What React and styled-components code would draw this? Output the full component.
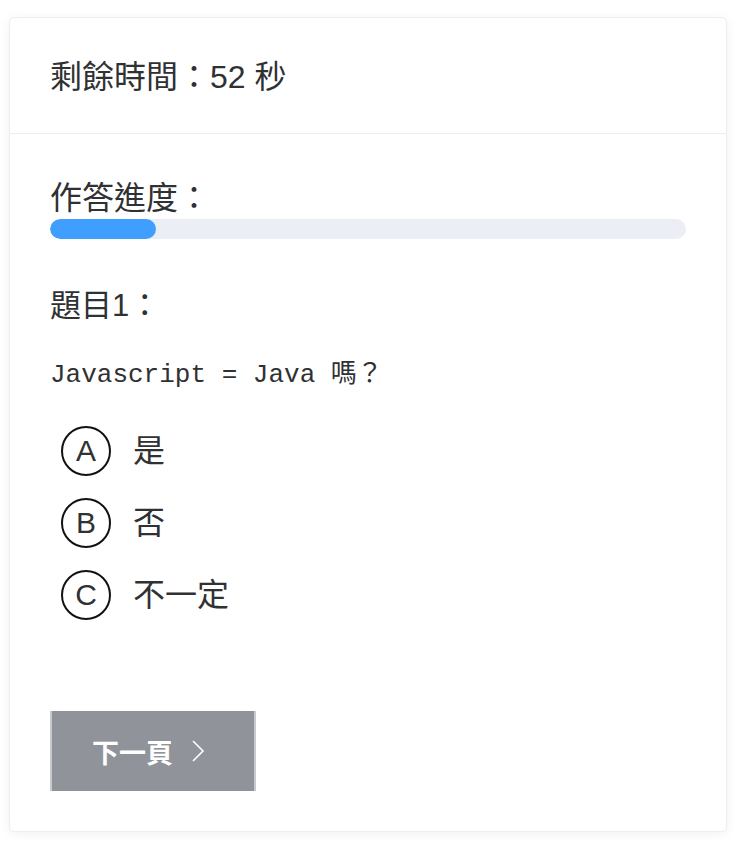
import styled, { createGlobalStyle } from "styled-components";

const GlobalStyle = createGlobalStyle`
  body {
    margin: 0;
    background: #ffffff;
    font-family: "Liberation Sans", "Noto Sans CJK TC", sans-serif;
    color: #303133;
  }
`;

const options = [
  { key: "A", label: "是" },
  { key: "B", label: "否" },
  { key: "C", label: "不一定" },
];

const App = () => {
  const progress = 1 / 6;

  return (
    <Page>
      <GlobalStyle />
      <Card>
        <Header>
          <Timer>剩餘時間：52 秒</Timer>
        </Header>
        <Body>
          <Label>作答進度：</Label>
          <Track>
            <Fill style={{ width: `${progress * 100}%` }} />
          </Track>
          <Title>題目1：</Title>
          <Question>Javascript = Java 嗎？</Question>
          <OptionList>
            {options.map(({ key, label }) => (
              <Option key={key}>
                <Circle>{key}</Circle>
                <OptionText>{label}</OptionText>
              </Option>
            ))}
          </OptionList>
          <NextButton disabled>
            下一頁
            <svg width="14" height="24" viewBox="0 0 14 24" fill="none">
              <path d="M2 2 L12 12 L2 22" stroke="#fff" strokeWidth="1.6" />
            </svg>
          </NextButton>
        </Body>
      </Card>
    </Page>
  );
};

const Page = styled.div`
  padding: 17px 15px 14px 9px;
`;

const Card = styled.div`
  background: #fff;
  border: 1px solid #ebeef5;
  border-radius: 5px;
  box-shadow: 0 2px 12px rgba(0, 0, 0, 0.06);
  overflow: hidden;
`;

const Header = styled.div`
  padding: 41px 40px 38px;
  border-bottom: 1px solid #ebeef5;
`;

const Timer = styled.div`
  font-size: 32px;
  line-height: 36px;
`;

const Body = styled.div`
  display: flex;
  flex-direction: column;
  align-items: flex-start;
  padding: 46px 40px 40px;
`;

const Label = styled.div`
  font-size: 32px;
  line-height: 36px;
`;

const Track = styled.div`
  align-self: stretch;
  height: 20px;
  margin-top: 3px;
  border-radius: 10px;
  background: #ebeef5;
  overflow: hidden;
`;

const Fill = styled.div`
  height: 100%;
  border-radius: 10px;
  background: #409eff;
`;

const Title = styled.div`
  margin-top: 49px;
  font-size: 31px;
  line-height: 36px;
`;

const Question = styled.div`
  margin-top: 36px;
  font-family: "Liberation Mono", "Noto Sans CJK TC", monospace;
  font-size: 26px;
  line-height: 30px;
`;

const OptionList = styled.div`
  display: flex;
  flex-direction: column;
  gap: 22px;
  margin-top: 36px;
  padding-left: 11px;
`;

const Option = styled.div`
  display: flex;
  align-items: center;
  gap: 22px;
  cursor: pointer;
`;

const Circle = styled.span`
  display: flex;
  align-items: center;
  justify-content: center;
  box-sizing: border-box;
  width: 50px;
  height: 50px;
  border: 2px solid #111;
  border-radius: 50%;
  font-size: 30px;
`;

const OptionText = styled.span`
  font-size: 32px;
  line-height: 36px;
`;

const NextButton = styled.button`
  display: flex;
  align-items: center;
  gap: 18px;
  margin-top: 91px;
  box-sizing: border-box;
  width: 206px;
  height: 80px;
  padding: 0 0 0 40px;
  border: none;
  border-left: 2px solid #c8c9cc;
  border-right: 2px solid #c8c9cc;
  background: #909399;
  color: #fff;
  font-family: "Liberation Sans", "Noto Sans CJK TC", sans-serif;
  font-size: 27px;
  font-weight: bold;
  cursor: not-allowed;
`;

export default App;
